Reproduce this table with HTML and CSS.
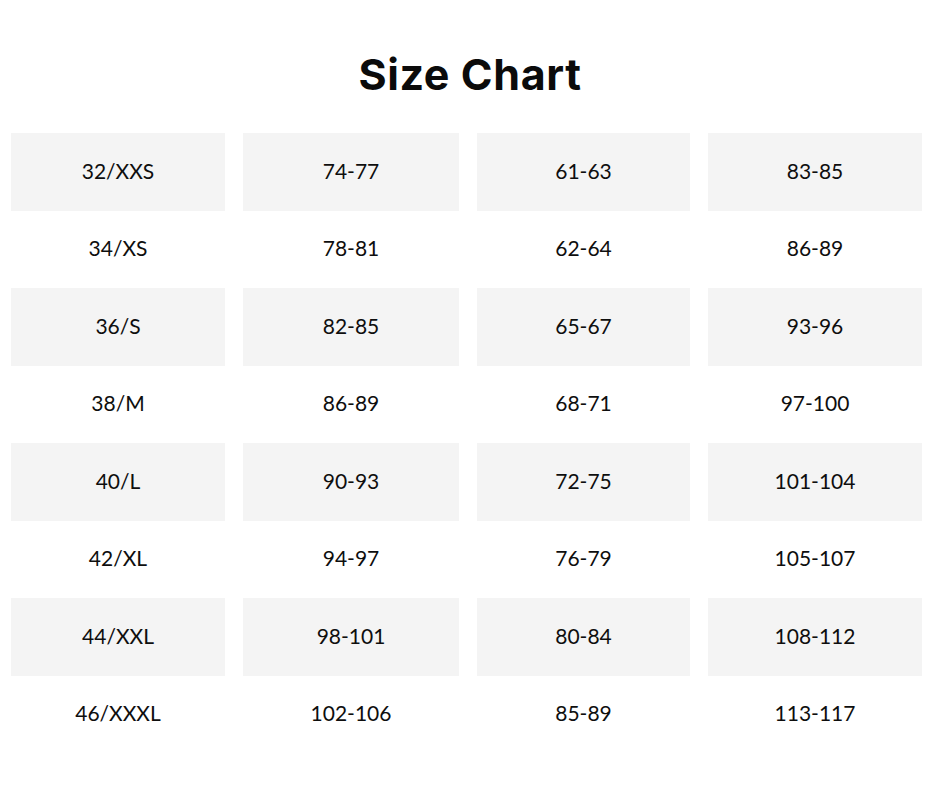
FILE: index.html
```html
<!DOCTYPE html>
<html lang="en">
<head>
<meta charset="utf-8">
<title>Size Chart</title>
<link rel="stylesheet" href="styles.css">
</head>
<body>
<main class="page">
  <h1 class="title">Size Chart</h1>
  <div class="chart">
    <div class="row shaded"><div class="cell">32/XXS</div><div class="cell">74-77</div><div class="cell">61-63</div><div class="cell">83-85</div></div>
    <div class="row"><div class="cell">34/XS</div><div class="cell">78-81</div><div class="cell">62-64</div><div class="cell">86-89</div></div>
    <div class="row shaded"><div class="cell">36/S</div><div class="cell">82-85</div><div class="cell">65-67</div><div class="cell">93-96</div></div>
    <div class="row"><div class="cell">38/M</div><div class="cell">86-89</div><div class="cell">68-71</div><div class="cell">97-100</div></div>
    <div class="row shaded"><div class="cell">40/L</div><div class="cell">90-93</div><div class="cell">72-75</div><div class="cell">101-104</div></div>
    <div class="row"><div class="cell">42/XL</div><div class="cell">94-97</div><div class="cell">76-79</div><div class="cell">105-107</div></div>
    <div class="row shaded"><div class="cell">44/XXL</div><div class="cell">98-101</div><div class="cell">80-84</div><div class="cell">108-112</div></div>
    <div class="row"><div class="cell">46/XXXL</div><div class="cell">102-106</div><div class="cell">85-89</div><div class="cell">113-117</div></div>
  </div>
</main>
</body>
</html>
```

FILE: styles.css
```css
* { box-sizing: border-box; }
html, body { margin: 0; padding: 0; background: #ffffff; }
body { width: 940px; height: 788px; overflow: hidden; }
.page {
  padding-top: 47px;
  padding-left: 11px;
}
.title {
  margin: 0;
  width: 918px;
  text-align: center;
  font-family: "Inter", "Open Sans", sans-serif;
  font-weight: 700;
  font-size: 43px;
  line-height: 54px;
  color: #0b0b0b;
  letter-spacing: 0.6px;
}
.chart {
  margin-top: 32px;
  display: flex;
  flex-direction: column;
}
.row {
  display: grid;
  grid-template-columns: 214px 216px 213px 214px;
  column-gap: 18px;
  height: 77.5px;
}
.cell {
  display: flex;
  align-items: center;
  justify-content: center;
  font-family: "Lato", "Noto Sans", sans-serif;
  font-size: 21px;
  color: #0e0e0e;
  padding-bottom: 3px;
}
.shaded .cell {
  background: #f4f4f4;
}
```
